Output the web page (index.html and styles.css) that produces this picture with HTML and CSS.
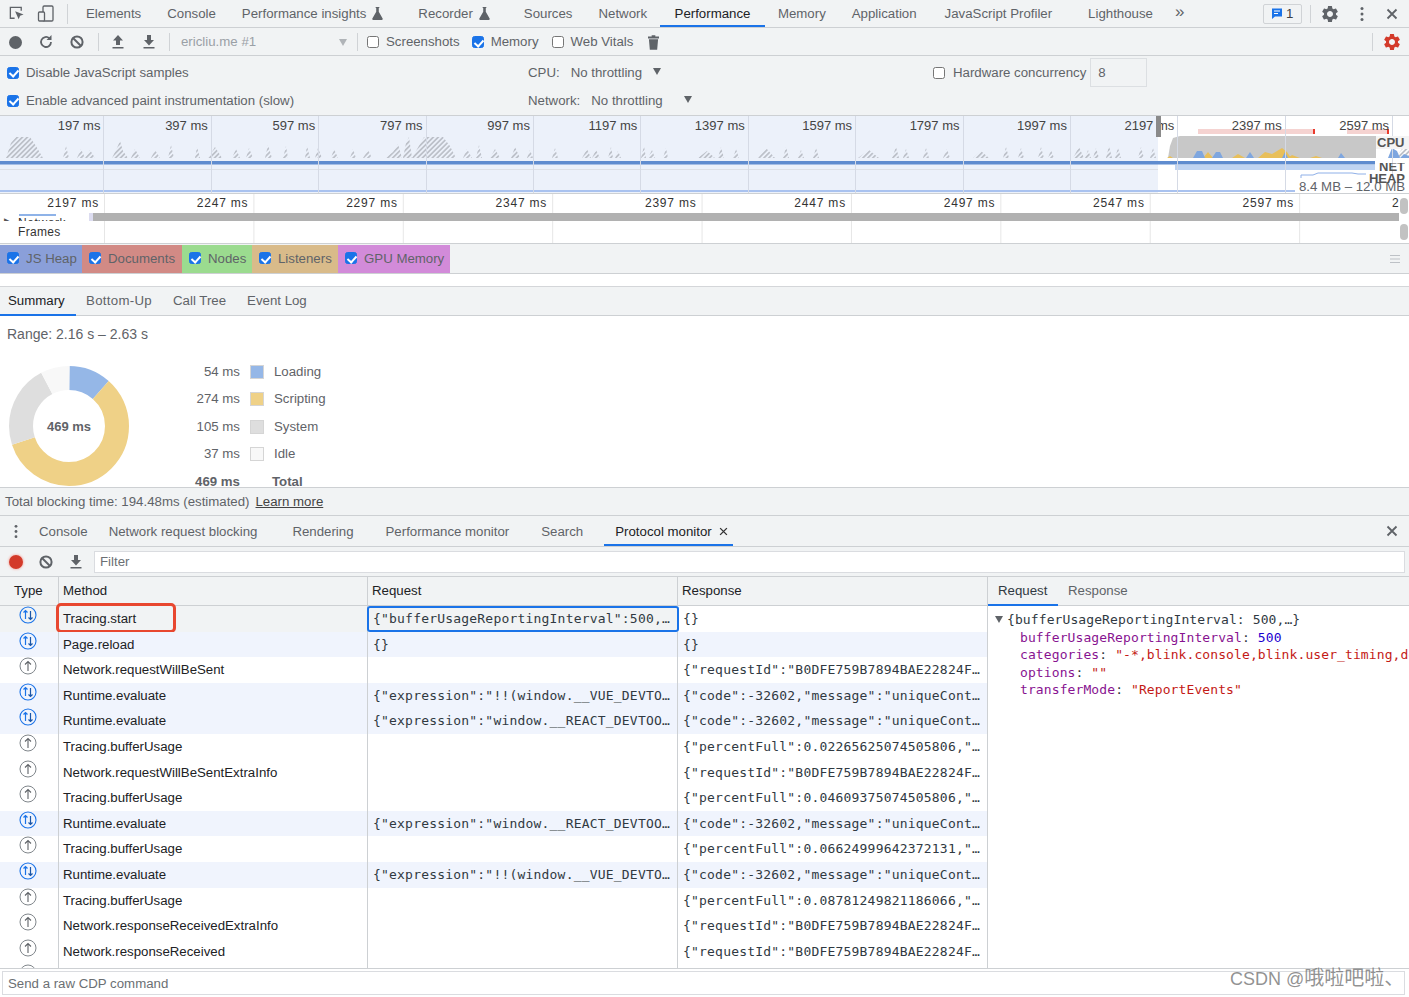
FILE: index.html
```html
<!DOCTYPE html>
<html lang="en">
<head>
<meta charset="utf-8">
<title>DevTools Performance</title>
<link rel="stylesheet" href="styles.css">
</head>
<body>
<svg class="defs" aria-hidden="true">
  <symbol id="gear" viewBox="0 0 24 24"><path d="M19.14 12.94c.04-.3.06-.61.06-.94 0-.32-.02-.64-.07-.94l2.03-1.58a.49.49 0 0 0 .12-.61l-1.92-3.32a.488.488 0 0 0-.59-.22l-2.39.96c-.5-.38-1.03-.7-1.62-.94l-.36-2.54a.484.484 0 0 0-.48-.41h-3.84c-.24 0-.43.17-.47.41l-.36 2.54c-.59.24-1.13.57-1.62.94l-2.39-.96c-.22-.08-.47 0-.59.22L2.74 8.87c-.12.21-.08.47.12.61l2.03 1.58c-.05.3-.09.63-.09.94s.02.64.07.94l-2.03 1.58a.49.49 0 0 0-.12.61l1.92 3.32c.12.22.37.29.59.22l2.39-.96c.5.38 1.03.7 1.62.94l.36 2.54c.05.24.24.41.48.41h3.84c.24 0 .44-.17.47-.41l.36-2.54c.59-.24 1.13-.56 1.62-.94l2.39.96c.22.08.47 0 .59-.22l1.92-3.32c.12-.22.07-.47-.12-.61l-2.01-1.58zM12 15.6c-1.98 0-3.6-1.62-3.6-3.6s1.62-3.6 3.6-3.6 3.6 1.62 3.6 3.6-1.62 3.6-3.6 3.6z"/></symbol>
  <symbol id="flask" viewBox="0 0 12 14"><path d="M4 0h4v1H7.4v4L11.6 12.4c.4.8-.1 1.6-1 1.6H1.4c-.9 0-1.4-.8-1-1.6L4.6 5V1H4z"/></symbol>
  <symbol id="block" viewBox="0 0 16 16"><circle cx="8" cy="8" r="5.6" fill="none" stroke="currentColor" stroke-width="2"/><path d="M4 4l8 8" stroke="currentColor" stroke-width="2"/></symbol>
  <symbol id="upload" viewBox="0 0 14 16"><path d="M7 1l5 5.500H9V11H5V6.500H2zM1.500 13h11v1.500h-11z"/></symbol>
  <symbol id="download" viewBox="0 0 14 16"><path d="M5 1h4v5h3l-5 5.500L2 6h3zM1.500 13h11v1.500h-11z"/></symbol>
  <symbol id="close" viewBox="0 0 12 12"><path d="M1.500 1.500l9 9M10.500 1.500l-9 9" stroke="currentColor" stroke-width="1.800" fill="none"/></symbol>
  <symbol id="sent" viewBox="0 0 18 18"><circle cx="9" cy="9" r="8" fill="none" stroke="#80868b" stroke-width="1"/><path d="M9 14V4.500M6 7.500l3-3 3 3" fill="none" stroke="#5f6368" stroke-width="1.100"/></symbol>
  <symbol id="both" viewBox="0 0 18 18"><circle cx="9" cy="9" r="8" fill="none" stroke="#1a73e8" stroke-width="1.100"/><path d="M6.500 13V4.500M4.500 6.500l2-2 2 2" fill="none" stroke="#1a73e8" stroke-width="1.200"/><path d="M11.500 5v8.500M9.500 11.500l2 2 2-2" fill="none" stroke="#1a56a8" stroke-width="1.200"/></symbol>
</svg>

<header class="tabbar">
  <svg class="ico ico-inspect" viewBox="0 0 18 18"><path d="M7 14H2.500V2.500H14V6" fill="none" stroke="#5f6368" stroke-width="1.400"/><path d="M7.500 6.500l9 3.500-3.700 1.300L11.300 15z" fill="#5f6368"/></svg>
  <svg class="ico ico-device" viewBox="0 0 18 18"><rect x="6" y="1" width="10" height="15" rx="1.200" fill="none" stroke="#5f6368" stroke-width="1.300"/><rect x="1.500" y="7" width="6" height="9" rx="1" fill="#f1f3f4" stroke="#5f6368" stroke-width="1.300"/></svg>
  <span class="sep sep-main"></span>
  <nav class="tabs">
    <a class="tab">Elements</a>
    <a class="tab">Console</a>
    <a class="tab tab-exp">Performance insights<svg class="flask"><use href="#flask"/></svg></a>
    <a class="tab tab-exp">Recorder<svg class="flask"><use href="#flask"/></svg></a>
    <a class="tab">Sources</a>
    <a class="tab">Network</a>
    <a class="tab active">Performance</a>
    <a class="tab">Memory</a>
    <a class="tab tab-app">Application</a>
    <a class="tab tab-wide">JavaScript Profiler</a>
    <a class="tab">Lighthouse</a>
    <span class="more">»</span>
  </nav>
  <div class="tabbar-right">
    <span class="badge"><svg class="badge-ico" viewBox="0 0 12 12"><path d="M1 1h10v8H4l-3 2.500z" fill="#1a73e8"/><path d="M3 3.500h6M3 6h4" stroke="#fff"/></svg>1</span>
    <span class="sep sep-right"></span>
    <svg class="ico ico-gear"><use href="#gear"/></svg>
    <svg class="ico ico-dots" viewBox="0 0 4 16"><circle cx="2" cy="2.500" r="1.500"/><circle cx="2" cy="8" r="1.500"/><circle cx="2" cy="13.500" r="1.500"/></svg>
    <svg class="ico ico-close"><use href="#close"/></svg>
  </div>
</header>

<div class="toolbar">
  <span class="rec-dot"></span>
  <svg class="ico ico-reload" viewBox="0 0 16 16"><path d="M13 8a5 5 0 1 1-1.600-3.700" fill="none" stroke="#5f6368" stroke-width="1.800"/><path d="M13.500 1v5h-5z" fill="#5f6368"/></svg>
  <svg class="ico ico-block"><use href="#block"/></svg>
  <span class="sep sep-a"></span>
  <svg class="ico ico-up"><use href="#upload"/></svg>
  <svg class="ico ico-down"><use href="#download"/></svg>
  <span class="sep sep-b"></span>
  <span class="target">ericliu.me #1</span>
  <span class="caret caret-muted"></span>
  <span class="sep sep-c"></span>
  <label class="check check-a"><input type="checkbox">Screenshots</label>
  <label class="check check-b"><input type="checkbox" checked>Memory</label>
  <label class="check check-c"><input type="checkbox">Web Vitals</label>
  <svg class="ico ico-trash" viewBox="0 0 12 16"><path d="M4 0h4v1.500h4V3.500H0V1.500h4zM1 4.500h10L10 16H2z"/></svg>
  <div class="toolbar-right">
    <span class="sep"></span>
    <svg class="ico ico-redgear"><use href="#gear"/></svg>
  </div>
</div>

<section class="settings">
  <label class="check"><input type="checkbox" checked>Disable JavaScript samples</label>
  <div class="throttle"><span>CPU:</span><span class="th-val">No throttling</span><span class="caret caret-cpu"></span></div>
  <div class="hw"><label class="check"><input type="checkbox">Hardware concurrency</label><span class="hw-input">8</span></div>
  <label class="check"><input type="checkbox" checked>Enable advanced paint instrumentation (slow)</label>
  <div class="throttle"><span>Network:</span><span class="th-val">No throttling</span><span class="caret caret-net"></span></div>
</section>

<section class="overview">
  <svg class="ov-chart" viewBox="0 116 1409 78" preserveAspectRatio="none">
    <defs>
      <pattern id="hatch" width="3.500" height="3.500" patternUnits="userSpaceOnUse" patternTransform="rotate(45)"><rect width="1.700" height="3.500" fill="#bcc0c8"/></pattern>
    </defs>
    <rect x="0" y="116" width="1158" height="78" fill="#ecf1fa"/>
    <path fill="url(#hatch)" d="M6 158L11 143 16 137H30L36 146 43 158ZM63 158l3-12 3 12zM77 158l4-9 4 9zM85 158l5-8 5 8zM112 158l5-10 3-7 3 10 5 7zM131 158l4-9 5 9zM151 158l4-8 5 8zM168 158l3-13 3 13zM195 158l2-11 3 11zM208 158l7-11 7 11zM232 158l4-9 4 9zM246 158l3-10 4 10zM265 158l3-13 4 13zM283 158l3-12 2 12zM305 158l2-12 3 12zM315 158l3-10 4 10zM331 158l3-9 4 9zM350 158l3-9 3 9zM363 158l5-8 4 8zM385 158l8-6 5-8 4 14zM403 158l3-15 3-6 3 21zM412 158l8-14 4-7H443L450 146 456 158ZM463 158l4-9 5 9zM476 158l3-13 3 13zM490 158l5-9 5 9zM511 158l4-11 5 11zM527 158l3-8 3 8zM552 158l3-10 3 10zM582 158l5-9 4 9zM592 158l4-8 4 8zM608 158l3-11 2 11zM615 158l3-7 3 7zM641 158l3-12 2 12zM648 158l4-8 3 8zM663 158l3-10 2 10zM698 158l9-7 8 7zM718 158l3-11 3 11zM733 158l3-9 3 9zM758 158l8-10 9 10zM783 158l3-11 3 11zM798 158l3-8 3 8zM813 158l3-10 3 10zM858 158l11-8 10 8zM892 158l4-11 3 11zM903 158l3-9 3 9zM923 158l3-10 3 10zM943 158l4-9 3 9zM973 158l8-7 8 7zM1003 158l3-11 3 11zM1018 158l3-10 3 10zM1038 158l3-11 3 11zM1048 158l3-8 3 8zM1073 158l6-11 5 11zM1085 158l3-8 3 8zM1093 158l3-10 3 10zM1106 158l3-12 3 12zM1115 158l3-10 3 10zM1138 158l3-11 3 11zM1150 158l3-10 3 10zM1395 158l7-9 7-4V158Z"/>
    <path fill="#c8c8c8" d="M1168 158L1170 146 1173 138 1180 136H1376V158Z"/>
    <path fill="#e8bf5a" d="M1167 158l3-2 3 2zM1203 158l5-6 5 6zM1232 158l6-4 7 4zM1258 158l7-6 7 2 5-3 5-3 5 4 4 6zM1288 158l4-3 8 3zM1310 158l6-2 6 2z"/>
    <path fill="#7ea6df" d="M1193 158l4-7 5 0 3 7zM1212 158l4-6 4 0 3 6zM1246 158l4-6 4 6zM1282 158l3-6 3 6zM1338 158l3-5 4 5zM1388 158l4-10 5 3 3 7zM1400 158l4-4 5 2V158Z"/>
    <path fill="#f5d3d1" d="M1198 129h117v5h-117zM1347 129h42v5h-42z"/>
    <path fill="#e93a2c" d="M1313 129h2v5h-2zM1387 129h2v5h-2z"/>
    <path fill="#dde0e6" d="M0 169h1158v1H0z"/>
    <path fill="#5f8ccf" d="M0 161h1375v3.500H0z"/>
    <path fill="#c0d4f2" d="M1175 165h200v5h-200z"/>
    <path fill="#a9c2ef" d="M0 190h1295v2H0z"/>
    <path fill="none" stroke="#8fb0e8" d="M1301 178v-3h12l5-2h34l6 1h8"/>
  </svg>
  <div class="ov-labels">
    <span>197 ms</span><span>397 ms</span><span>597 ms</span><span>797 ms</span><span>997 ms</span><span>1197 ms</span><span>1397 ms</span><span>1597 ms</span><span>1797 ms</span><span>1997 ms</span><span>2197 ms</span><span>2397 ms</span><span>2597 ms</span>
  </div>
  <span class="ov-grip"></span>
  <span class="ov-tag ov-cpu">CPU</span>
  <span class="ov-tag ov-net">NET</span>
  <span class="ov-range">8.4 MB – 12.0 MB</span>
  <span class="ov-tag ov-heap">HEAP</span>
</section>

<section class="detail">
  <div class="ruler">
    <span>2197 ms</span><span>2247 ms</span><span>2297 ms</span><span>2347 ms</span><span>2397 ms</span><span>2447 ms</span><span>2497 ms</span><span>2547 ms</span><span>2597 ms</span><span>2647 ms</span>
  </div>
  <div class="net-row"><span class="net-head"><span class="net-blue"></span><span class="net-arrow">▶</span><span class="net-label">Network</span><span class="net-edge"></span></span><span class="net-bar"></span></div>
  <div class="frames-row">Frames</div>
  <span class="thumb thumb-a"></span>
  <span class="thumb thumb-b"></span>
</section>

<section class="counters">
  <label class="chip chip-heap"><input type="checkbox" checked>JS Heap</label>
  <label class="chip chip-doc"><input type="checkbox" checked>Documents</label>
  <label class="chip chip-nodes"><input type="checkbox" checked>Nodes</label>
  <label class="chip chip-list"><input type="checkbox" checked>Listeners</label>
  <label class="chip chip-gpu"><input type="checkbox" checked>GPU Memory</label>
  <svg class="ico ico-lines" viewBox="0 0 10 8"><path d="M0 .5h10M0 4h10M0 7.500h10" stroke="#bdc1c6"/></svg>
</section>

<nav class="subtabs">
  <a class="subtab active">Summary</a>
  <a class="subtab subtab-bu">Bottom-Up</a>
  <a class="subtab">Call Tree</a>
  <a class="subtab">Event Log</a>
</nav>

<section class="summary">
  <p class="range">Range: 2.16 s – 2.63 s</p>
  <div class="sum-body">
    <svg class="donut" viewBox="0 0 122 122">
      <g fill="none" stroke-width="24" transform="rotate(-90 61 61)">
        <circle cx="61" cy="61" r="48" pathLength="469" stroke="#95b7e7" stroke-dasharray="54 415"/>
        <circle cx="61" cy="61" r="48" pathLength="469" stroke="#efd187" stroke-dasharray="274 195" stroke-dashoffset="-54"/>
        <circle cx="61" cy="61" r="48" pathLength="469" stroke="#dedede" stroke-dasharray="105 364" stroke-dashoffset="-328"/>
        <circle cx="61" cy="61" r="48" pathLength="469" stroke="#f8f8f8" stroke-dasharray="37 432" stroke-dashoffset="-433"/>
      </g>
      <text x="61" y="65.500" text-anchor="middle" class="donut-text">469 ms</text>
    </svg>
    <div class="sum-legend">
      <span class="sl-val">54 ms</span><span class="swatch sw-load"></span><span>Loading</span>
      <span class="sl-val">274 ms</span><span class="swatch sw-script"></span><span>Scripting</span>
      <span class="sl-val">105 ms</span><span class="swatch sw-sys"></span><span>System</span>
      <span class="sl-val">37 ms</span><span class="swatch sw-idle"></span><span>Idle</span>
      <b class="sl-val">469 ms</b><span></span><b class="sl-total">Total</b>
    </div>
  </div>
</section>

<footer class="tbt">Total blocking time: 194.48ms (estimated)<a class="learn">Learn more</a></footer>

<nav class="drawer-tabs">
  <svg class="ico ico-ddots" viewBox="0 0 4 16"><circle cx="2" cy="2.500" r="1.500"/><circle cx="2" cy="8" r="1.500"/><circle cx="2" cy="13.500" r="1.500"/></svg>
  <a class="dtab dtab-console">Console</a>
  <a class="dtab dtab-nrb">Network request blocking</a>
  <a class="dtab dtab-render">Rendering</a>
  <a class="dtab dtab-perf">Performance monitor</a>
  <a class="dtab dtab-search">Search</a>
  <a class="dtab dtab-proto active">Protocol monitor<svg class="ico-x"><use href="#close"/></svg></a>
  <svg class="ico ico-dclose"><use href="#close"/></svg>
</nav>

<div class="drawer-tools">
  <span class="rec-red"></span>
  <svg class="ico ico-block2"><use href="#block"/></svg>
  <svg class="ico ico-down2"><use href="#download"/></svg>
  <input class="filter" placeholder="Filter">
</div>

<main class="proto">
  <div class="grid-wrap">
    <div class="grid">
      <div class="hd hd-type">Type</div><div class="hd">Method</div><div class="hd">Request</div><div class="hd">Response</div>

      <div class="c ct"><svg class="t-ico"><use href="#both"/></svg></div><div class="c cm first-method">Tracing.start<span class="callout"></span></div><div class="c cj selected">{"bufferUsageReportingInterval":500,"categories":"-*"}</div><div class="c cj">{}</div>

      <div class="c ct b"><svg class="t-ico"><use href="#both"/></svg></div><div class="c cm b">Page.reload</div><div class="c cj b">{}</div><div class="c cj b">{}</div>

      <div class="c ct"><svg class="t-ico"><use href="#sent"/></svg></div><div class="c cm">Network.requestWillBeSent</div><div class="c cj"></div><div class="c cj">{"requestId":"B0DFE759B7894BAE22824F0000000"}</div>

      <div class="c ct b"><svg class="t-ico"><use href="#both"/></svg></div><div class="c cm b">Runtime.evaluate</div><div class="c cj b">{"expression":"!!(window.__VUE_DEVTOOLS_GLOBAL"}</div><div class="c cj b">{"code":-32602,"message":"uniqueContextId"}</div>

      <div class="c ct b"><svg class="t-ico"><use href="#both"/></svg></div><div class="c cm b">Runtime.evaluate</div><div class="c cj b">{"expression":"window.__REACT_DEVTOOLS_GLOBAL"}</div><div class="c cj b">{"code":-32602,"message":"uniqueContextId"}</div>

      <div class="c ct"><svg class="t-ico"><use href="#sent"/></svg></div><div class="c cm">Tracing.bufferUsage</div><div class="c cj"></div><div class="c cj">{"percentFull":0.02265625074505806,"eventCount"}</div>

      <div class="c ct"><svg class="t-ico"><use href="#sent"/></svg></div><div class="c cm">Network.requestWillBeSentExtraInfo</div><div class="c cj"></div><div class="c cj">{"requestId":"B0DFE759B7894BAE22824F0000000"}</div>

      <div class="c ct"><svg class="t-ico"><use href="#sent"/></svg></div><div class="c cm">Tracing.bufferUsage</div><div class="c cj"></div><div class="c cj">{"percentFull":0.04609375074505806,"eventCount"}</div>

      <div class="c ct b"><svg class="t-ico"><use href="#both"/></svg></div><div class="c cm b">Runtime.evaluate</div><div class="c cj b">{"expression":"window.__REACT_DEVTOOLS_GLOBAL"}</div><div class="c cj b">{"code":-32602,"message":"uniqueContextId"}</div>

      <div class="c ct"><svg class="t-ico"><use href="#sent"/></svg></div><div class="c cm">Tracing.bufferUsage</div><div class="c cj"></div><div class="c cj">{"percentFull":0.06624999642372131,"eventCount"}</div>

      <div class="c ct b"><svg class="t-ico"><use href="#both"/></svg></div><div class="c cm b">Runtime.evaluate</div><div class="c cj b">{"expression":"!!(window.__VUE_DEVTOOLS_GLOBAL"}</div><div class="c cj b">{"code":-32602,"message":"uniqueContextId"}</div>

      <div class="c ct"><svg class="t-ico"><use href="#sent"/></svg></div><div class="c cm">Tracing.bufferUsage</div><div class="c cj"></div><div class="c cj">{"percentFull":0.08781249821186066,"eventCount"}</div>

      <div class="c ct"><svg class="t-ico"><use href="#sent"/></svg></div><div class="c cm">Network.responseReceivedExtraInfo</div><div class="c cj"></div><div class="c cj">{"requestId":"B0DFE759B7894BAE22824F0000000"}</div>

      <div class="c ct"><svg class="t-ico"><use href="#sent"/></svg></div><div class="c cm">Network.responseReceived</div><div class="c cj"></div><div class="c cj">{"requestId":"B0DFE759B7894BAE22824F0000000"}</div>

      <div class="c ct"><svg class="t-ico"><use href="#sent"/></svg></div><div class="c cm"></div><div class="c cj"></div><div class="c cj"></div>
    </div>
  </div>
  <aside class="side">
    <div class="side-tabs"><a class="stab active">Request</a><a class="stab">Response</a></div>
    <div class="tree">
      <div class="tree-root"><span class="tri"></span>{bufferUsageReportingInterval: 500,…}</div>
      <div class="tree-line"><span class="k">bufferUsageReportingInterval</span>: <span class="n">500</span></div>
      <div class="tree-line"><span class="k">categories</span>: <span class="s">"-*,blink.console,blink.user_timing,devtools.timeline,disabled-by-default-devtools.screenshot"</span></div>
      <div class="tree-line"><span class="k">options</span>: <span class="s">""</span></div>
      <div class="tree-line"><span class="k">transferMode</span>: <span class="s">"ReportEvents"</span></div>
    </div>
  </aside>
</main>

<div class="cdp"><input class="cdp-input" placeholder="Send a raw CDP command"></div>
<div class="watermark">CSDN @<span class="wm-cjk">哦啦吧啦、</span></div>
</body>
</html>
```

FILE: styles.css
```css
* { box-sizing: border-box; }
html, body { margin: 0; padding: 0; }
body {
  position: relative;
  width: 1409px;
  height: 997px;
  overflow: hidden;
  background: #fff;
  color: #5f6368;
  font: 13.250px/16px "Liberation Sans", Arial, sans-serif;
}
.defs { position: absolute; width: 0; height: 0; }
.ico { display: block; flex: none; fill: #5f6368; color: #5f6368; }
.sep { display: block; flex: none; width: 1px; height: 18px; background: #d0d3d6; }

/* top tab bar */
.tabbar {
  display: flex; align-items: center;
  height: 28px; background: #f1f3f4; border-bottom: 1px solid #cdd0d3;
}
.ico-inspect { width: 17px; height: 17px; margin-left: 8px; }
.ico-device { width: 18px; height: 18px; margin-left: 12px; }
.sep-main { margin-left: 12px; height: 20px; }
.tabs { display: flex; align-items: stretch; height: 27px; margin-left: 5px; }
.tab {
  display: flex; align-items: center;
  padding: 0 13px; height: 27px;
  color: #5f6368; white-space: nowrap;
}
.tab-exp { padding-right: 22px; }
.tab-exp + .tab-exp { padding-right: 21px; }
.tab-app { padding-right: 15px; }
.tab-wide { padding-right: 23px; }
.tab.active { padding: 2px 14.500px 0; color: #202124; border-bottom: 2px solid #1a73e8; }
.flask { width: 11px; height: 13px; margin-left: 6px; fill: #5f6368; }
.more { margin-left: 9px; font-size: 17px; color: #5f6368; line-height: 24px; }
.tabbar-right { display: flex; align-items: center; margin-left: auto; }
.badge {
  display: flex; align-items: center; gap: 3px;
  width: 39px; height: 20px; padding-left: 7px;
  border: 1px solid #d0d3d6; border-radius: 2px; color: #3c4043;
}
.badge-ico { width: 12px; height: 13px; }
.sep-right { margin-left: 8px; }
.ico-gear { width: 20px; height: 20px; margin-left: 9px; }
.ico-dots { width: 4px; height: 16px; margin-left: 20px; }
.ico-close { width: 12px; height: 12px; margin-left: 22px; margin-right: 11px; }

/* recording toolbar */
.toolbar {
  display: flex; align-items: center;
  height: 28px; padding-top: 1px;
  background: #f1f3f4; border-bottom: 1px solid #cdd0d3;
}
.rec-dot { width: 13px; height: 13px; margin-left: 9px; border-radius: 50%; background: #5f6368; }
.ico-reload { width: 16px; height: 16px; margin-left: 16px; }
.ico-block { width: 16px; height: 16px; margin-left: 15px; }
.sep-a { margin-left: 13px; }
.ico-up { width: 14px; height: 16px; margin-left: 12px; }
.ico-down { width: 14px; height: 16px; margin-left: 17px; }
.sep-b { margin-left: 13px; }
.target { margin-left: 11px; width: 158px; color: #9aa0a6; }
.caret {
  display: block; flex: none; width: 0; height: 0;
  border-left: 4px solid transparent; border-right: 4px solid transparent;
  border-top: 7px solid #5f6368;
}
.caret-muted { border-top-color: #b0b4b8; }
.sep-c { margin-left: 10px; }
.check { display: flex; align-items: center; white-space: nowrap; color: #5f6368; }
.check input, .chip input {
  appearance: none; -webkit-appearance: none;
  position: relative; flex: none;
  width: 12px; height: 12px; margin: 0 7px 0 0;
  border: 1px solid #767676; border-radius: 2.500px; background: #fff;
}
.check input:checked, .chip input:checked { background: #1a73e8; border-color: #1a73e8; }
.check input:checked::after, .chip input:checked::after {
  content: ""; position: absolute; left: 3px; top: 0.500px;
  width: 4px; height: 7px;
  border: solid #fff; border-width: 0 2px 2px 0; transform: rotate(42deg);
}
.check-a { margin-left: 9px; }
.check-b { margin-left: 12px; }
.check-c { margin-left: 13px; }
.ico-trash { width: 11px; height: 15px; margin-left: 15px; }
.toolbar-right { display: flex; align-items: center; margin-left: auto; }
.ico-redgear { width: 20px; height: 20px; margin: 0 7px 0 9px; fill: #d33a2a; }

/* settings */
.settings {
  display: grid;
  grid-template-columns: 528px 405px 1fr;
  grid-auto-rows: 28px;
  height: 60px; padding-top: 2.500px;
  background: #f1f3f4; border-bottom: 1px solid #cdd0d3;
}
.settings > .check { padding-left: 7px; }
.throttle { display: flex; align-items: center; }
.th-val { margin-left: 11px; }
.caret-cpu { margin-left: 11px; margin-top: -2px; }
.caret-net { margin-left: 21px; margin-top: -2px; }
.hw { display: flex; align-items: center; }
.hw .check input { margin-right: 8px; }
.hw-input {
  width: 57px; height: 29px; margin-left: 4px; padding: 6px 7px;
  border: 1px solid #dcdfe2;
}

/* overview (free canvas chart) */
.overview {
  position: relative; height: 78px; overflow: hidden;
  background: #fff; border-bottom: 1px solid #cdd0d3;
}
.ov-chart { position: absolute; left: 0; top: 0; width: 1409px; height: 78px; }
.ov-labels { position: absolute; left: -3px; top: 0; display: flex; height: 78px; color: #444; }
.ov-labels span {
  flex: none; width: 107.400px; height: 78px;
  padding-right: 3px; font-size: 13px; text-align: right; line-height: 19px;
  border-right: 1px solid #d5dae5; white-space: nowrap;
}
.ov-grip { position: absolute; left: 1156px; top: 0; width: 5px; height: 21px; background: #8a8a8a; }
.ov-tag {
  position: absolute; right: 4px;
  font-size: 13px; font-weight: 700; line-height: 13px; color: #555;
}
.ov-cpu { top: 20px; right: 0; width: 33px; padding-left: 1px; background: #f4f4f4; }
.ov-net { top: 47px; height: 9px; overflow: hidden; line-height: 8px; }
.ov-heap { top: 56px; }
.ov-range {
  position: absolute; left: 1295px; top: 63px; padding: 0 4px;
  line-height: 15px; background: #fff; color: #5f6368; white-space: nowrap;
}

/* detail */
.detail {
  position: relative; height: 50px; overflow: hidden;
  background: linear-gradient(to right, #e6e6e6 1px, transparent 1px) 104px 0 / 149.400px 100% repeat-x #fff;
  border-bottom: 1px solid #cdd0d3;
}
.ruler { display: flex; width: 1444.400px; height: 19px; margin-left: -45.400px; overflow: hidden; }
.ruler span {
  flex: none; width: 149.400px; padding-right: 5px;
  text-align: right; font-size: 12px; line-height: 19px;
  letter-spacing: .8px; color: #333; white-space: nowrap;
}
.net-row { display: flex; height: 8px; }
.net-head { position: relative; display: block; width: 93px; height: 8px; overflow: hidden; background: #fff; }
.net-blue { position: absolute; left: 19px; top: 1px; width: 37px; height: 2px; background: #8fb3e8; }
.net-arrow { position: absolute; left: 4px; top: 2px; font-size: 9px; line-height: 12px; color: #555; }
.net-label { position: absolute; left: 18px; top: 3px; font-size: 12px; line-height: 14px; letter-spacing: .6px; color: #333; white-space: nowrap; }
.net-edge { position: absolute; left: 89px; top: 0; width: 4px; height: 8px; background: #dcdcf0; }
.net-bar { display: block; width: 1306px; height: 8px; background: #b1b1b1; }
.frames-row { height: 22px; padding-left: 18px; font-size: 12px; line-height: 22px; letter-spacing: .3px; color: #333; }
.thumb { position: absolute; left: 1400px; width: 8px; height: 16px; border-radius: 4px; background: #c2c2c2; }
.thumb-a { top: 4px; }
.thumb-b { top: 30px; }

/* counters */
.counters {
  display: flex; align-items: stretch;
  height: 30px; padding-top: 1px;
  background: #f1f3f4; border-bottom: 1px solid #cdd0d3;
}
.chip { display: flex; align-items: center; padding-left: 7px; color: #5f6368; white-space: nowrap; }
.chip input { margin-right: 7px; margin-top: -2px; }
.chip-heap { width: 82px; background: #8a9fd9; }
.chip-doc { width: 100px; background: #d28a85; }
.chip-nodes { width: 70px; background: #9bdb8f; }
.chip-list { width: 86px; background: #d9bb8a; }
.chip-gpu { width: 112px; background: #d28bd9; }
.ico-lines { width: 10px; height: 8px; margin: auto 9px auto auto; }

/* subtabs */
.subtabs {
  display: flex; height: 30px; margin-top: 12px;
  background: #f1f3f4;
  border-top: 1px solid #d4d6d9; border-bottom: 1px solid #cdd0d3;
}
.subtab {
  display: flex; align-items: center; height: 29px; padding: 0 8px; margin-right: 5px;
  color: #5f6368; border-bottom: 2px solid transparent;
}
.subtab-bu { letter-spacing: .3px; }
.subtab.active { width: 76px; margin-right: 2px; color: #202124; border-bottom-color: #1a73e8; }

/* summary */
.summary { height: 171px; overflow: hidden; padding-left: 7px; background: #fff; }
.range { margin: 10px 0 0; height: 26px; font-size: 14px; color: #5f6368; }
.sum-body { display: flex; align-items: flex-start; margin-left: 1px; }
.donut { display: block; flex: none; width: 122px; height: 122px; margin-top: 13px; }
.donut-text { font: 700 13px "Liberation Sans", Arial, sans-serif; fill: #5f6368; }
.sum-legend {
  display: grid;
  grid-template-columns: 110px 14px auto;
  column-gap: 10px;
  grid-auto-rows: 27.500px;
  align-items: center;
  margin-top: 6px;
}
.sl-val { text-align: right; }
.sl-total { margin-left: -2px; }
.swatch { display: block; width: 14px; height: 14px; border: 1px solid #d5d5d5; }
.sw-load { background: #95b7e7; }
.sw-script { background: #efd187; }
.sw-sys { background: #dedede; }
.sw-idle { background: #f8f8f8; }

.tbt {
  display: flex; align-items: center;
  height: 29px; padding-left: 5px;
  background: #f1f3f4;
  border-top: 1px solid #cdd0d3; border-bottom: 1px solid #cdd0d3;
}
.learn { margin-left: 6px; text-decoration: underline; color: #444; }

/* drawer */
.drawer-tabs {
  position: relative; display: flex; align-items: stretch;
  height: 31px; background: #f1f3f4; border-bottom: 1px solid #cdd0d3;
}
.ico-ddots { width: 4px; height: 15px; margin: 8px 0 0 14px; }
.dtab { display: flex; align-items: center; height: 30px; padding-top: 3px; white-space: nowrap; color: #5f6368; border-bottom: 2px solid transparent; }
.dtab-console { margin-left: 21px; }
.dtab-nrb { margin-left: 21px; }
.dtab-render { margin-left: 35px; }
.dtab-perf { margin-left: 32px; }
.dtab-search { margin-left: 32px; }
.dtab-proto { margin-left: 21px; padding: 3px 5px 0 11px; color: #202124; border-bottom-color: #1a73e8; }
.ico-x { width: 9px; height: 9px; margin-left: 7px; color: #333; }
.ico-dclose { width: 12px; height: 12px; margin: 9px 11px 0 auto; }

.drawer-tools {
  display: flex; align-items: center;
  height: 30px; background: #f1f3f4; border-bottom: 1px solid #cdd0d3;
}
.rec-red { width: 14px; height: 14px; margin-left: 9px; border-radius: 50%; background: #d33a2a; box-shadow: 0 0 2px 1px #f4c7c2; }
.ico-block2 { width: 16px; height: 16px; margin-left: 15px; }
.ico-down2 { width: 14px; height: 16px; margin-left: 15px; }
.filter {
  width: 1311px; height: 22px; margin-left: 11px; padding: 0 5px;
  font: 13.250px "Liberation Sans", Arial, sans-serif;
  background: #fff; border: 1px solid #dadce0; outline: none;
}
.filter::placeholder, .cdp-input::placeholder { color: #6b6f73; opacity: 1; }

/* protocol table */
.proto { display: flex; height: 391px; overflow: hidden; background: #fff; }
.grid-wrap { flex: none; width: 988px; overflow: hidden; }
.grid {
  display: grid;
  grid-template-columns: 59px 309px 310px 310px;
  grid-template-rows: 29px;
  grid-auto-rows: 25.600px;
}
.hd {
  display: flex; align-items: center; padding: 0 4px;
  background: #f1f3f4; color: #202124;
  border-right: 1px solid #cdd0d3; border-bottom: 1px solid #cdd0d3;
}
.hd-type { padding-left: 14px; }
.c {
  position: relative; min-width: 0;
  border-right: 1px solid #cdd0d3;
  color: #202124; line-height: 25.200px; white-space: nowrap;
}
.c.b { background: #f0f4fd; }
.ct { display: flex; justify-content: center; }
.t-ico { display: block; width: 18px; height: 18px; margin: 0 0 0 -3px; }
.cm { padding-left: 4px; }
.first-method { background: #f1f3f4; }
.grid > .ct:nth-child(5) { background: #f1f3f4; }
.cj {
  padding: 0 5px; overflow: hidden; text-overflow: ellipsis;
  font: 13px/25.200px "DejaVu Sans Mono", "Liberation Mono", monospace;
  letter-spacing: .2px; color: #303942;
}
.selected { padding: 0 4px; background: #f1f3f4; border: 2px solid #1a73e8; border-radius: 3px; margin: 0 -1px 0 -1px; line-height: 22px; }
.callout {
  position: absolute; left: -3px; top: -3px;
  width: 120px; height: 30px;
  border: 3px solid #e8472f; border-radius: 5px;
}
.side { flex: 1; min-width: 0; overflow: hidden; }
.side-tabs {
  display: flex; height: 29px;
  background: #f1f3f4; border-bottom: 1px solid #cdd0d3;
}
.stab { display: flex; align-items: center; height: 29px; padding: 0 10px; color: #5f6368; border-bottom: 2px solid transparent; }
.stab.active { width: 70px; color: #303942; border-bottom-color: #1a73e8; }
.tree {
  padding: 5px 0 0 7px;
  font: 13px/17.500px "DejaVu Sans Mono", "Liberation Mono", monospace;
  letter-spacing: .1px; color: #303942; white-space: nowrap;
}
.tree-root { display: flex; align-items: center; }
.tri {
  display: block; width: 0; height: 0; margin-right: 4px;
  border-left: 4px solid transparent; border-right: 4px solid transparent;
  border-top: 7px solid #5f6368;
}
.tree-line { padding-left: 25px; }
.k { color: #881391; }
.n { color: #1c00cf; }
.s { color: #c41a16; }

/* bottom */
.cdp { height: 29px; padding: 2px 4px 0 2px; border-top: 1px solid #cdd0d3; background: #fff; }
.cdp-input {
  display: block; width: 1403px; height: 24px; padding: 0 5px;
  font: 13.250px "Liberation Sans", Arial, sans-serif;
  border: 1px solid #dadce0; outline: none; background: #fff;
}
.watermark {
  position: absolute; left: 1230px; top: 967px;
  font: 18px/22px "Liberation Sans", "Noto Sans CJK SC", sans-serif;
  color: rgba(110, 110, 110, .75); white-space: nowrap;
}
.wm-cjk { font-size: 20px; }
```
